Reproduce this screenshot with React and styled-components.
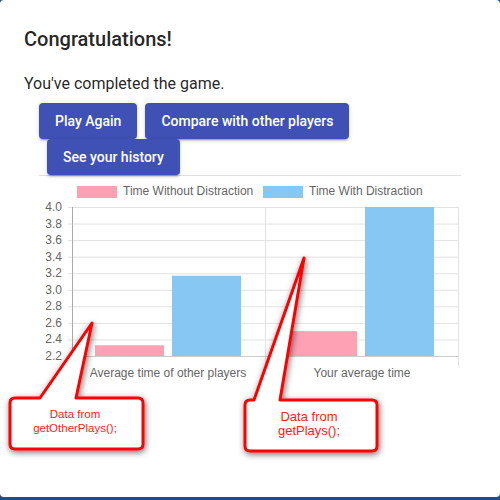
import styled, { createGlobalStyle } from "styled-components";

const Global = createGlobalStyle`
  html, body {
    margin: 0;
    padding: 0;
    background: #1f4c8c;
  }
  body {
    font-family: Roboto, "Liberation Sans", sans-serif;
  }
`;

const Dialog = styled.div`
  position: relative;
  width: 500px;
  height: 497px;
  background: #fff;
  border-radius: 4px;
  overflow: hidden;
`;

const Title = styled.h2`
  margin: 0;
  padding: 23px 24px 0;
  font-size: 20px;
  line-height: 32px;
  font-weight: 500;
  color: rgba(0, 0, 0, 0.87);
`;

const Text = styled.p`
  margin: 17px 24px 0;
  font-size: 16px;
  line-height: 24px;
  color: rgba(0, 0, 0, 0.87);
`;

const Actions = styled.div`
  margin: 7px 39px 0;
  display: flex;
  flex-wrap: wrap;
`;

const Button = styled.button`
  height: 36px;
  padding: 6px 16px;
  margin-left: ${(p) => (p.$first ? "0" : "8px")};
  border: none;
  border-radius: 4px;
  background: #3f51b5;
  color: #fff;
  font-family: Roboto, "Liberation Sans", sans-serif;
  font-size: 14px;
  font-weight: 500;
  line-height: 24px;
  letter-spacing: 0;
  cursor: pointer;
  box-shadow: 0 3px 1px -2px rgba(0, 0, 0, 0.2), 0 2px 2px 0 rgba(0, 0, 0, 0.14),
    0 1px 5px 0 rgba(0, 0, 0, 0.12);
`;

const Divider = styled.div`
  margin: 0 39px;
  height: 1px;
  background: #e0e0e0;
`;

const Chart = styled.svg`
  display: block;
  margin-left: 39px;
  font-family: "Liberation Sans", Arial, sans-serif;
  font-size: 12px;
`;

const Notes = styled.svg`
  position: absolute;
  left: 0;
  top: 0;
  pointer-events: none;
  font-family: "Liberation Sans", Arial, sans-serif;
`;

const PINK = "#ffa1b4";
const BLUE = "#86c7f3";

const plot = { left: 33, right: 419, top: 31, bottom: 180 };
const ticks = ["4.0", "3.8", "3.6", "3.4", "3.2", "3.0", "2.8", "2.6", "2.4", "2.2"];
const yOf = (v) => plot.bottom - ((v - 2.2) / 1.8) * (plot.bottom - plot.top);

const bars = [
  { x: 56, w: 69, v: 2.33, c: PINK },
  { x: 133, w: 69, v: 3.17, c: BLUE },
  { x: 250, w: 68, v: 2.5, c: PINK },
  { x: 326, w: 69, v: 4.0, c: BLUE },
];

function BarChart() {
  return (
    <Chart width="422" height="210" viewBox="0 0 422 210">
      <rect x="38" y="10" width="40" height="12" fill={PINK} />
      <text x="84" y="19" fill="#666">Time Without Distraction</text>
      <rect x="224" y="10" width="40" height="12" fill={BLUE} />
      <text x="270" y="19" fill="#666">Time With Distraction</text>

      {ticks.map((t, i) => {
        const y = plot.top + (i * (plot.bottom - plot.top)) / 9;
        return (
          <g key={t}>
            <line x1={plot.left - 4} x2={plot.right} y1={y + 0.5} y2={y + 0.5} stroke="#e2e2e2" />
            <text x="23" y={y + 4} fill="#666" textAnchor="end">{t}</text>
          </g>
        );
      })}

      <line x1="226.5" x2="226.5" y1={plot.top} y2="190" stroke="#e2e2e2" />
      <line x1="419.5" x2="419.5" y1={plot.top} y2="190" stroke="#e2e2e2" />

      {bars.map((b, i) => (
        <rect key={i} x={b.x} y={yOf(b.v)} width={b.w} height={plot.bottom - yOf(b.v)} fill={b.c} />
      ))}

      <line x1="33.5" x2="33.5" y1={plot.top} y2={plot.bottom + 1} stroke="#aaa" />
      <line x1={plot.left} x2={plot.right} y1="180.5" y2="180.5" stroke="#ccc" />

      <text x="129" y="201" fill="#666" textAnchor="middle">Average time of other players</text>
      <text x="323" y="201" fill="#666" textAnchor="middle">Your average time</text>
    </Chart>
  );
}

function Callouts() {
  return (
    <Notes width="500" height="500" viewBox="0 0 500 500">
      <defs>
        <filter id="shade" x="-30%" y="-30%" width="160%" height="160%">
          <feDropShadow dx="1" dy="2" stdDeviation="3" floodColor="#000" floodOpacity="0.55" />
        </filter>
      </defs>
      <g filter="url(#shade)" fill="#fff" stroke="#ff0000" strokeWidth="3" strokeLinejoin="round">
        <path d="M15 398 L40 398 L92 323 L76 398 L138 398 Q143 398 143 403 L143 444 Q143 449 138 449 L15 449 Q10 449 10 444 L10 403 Q10 398 15 398 Z" />
        <path d="M250 400 L254 400 L304 258 L280 400 L372 400 Q377 400 377 405 L377 446 Q377 451 372 451 L250 451 Q245 451 245 446 L245 405 Q245 400 250 400 Z" />
      </g>
      <g fill="#ff1a1a" textAnchor="middle">
        <text x="75" y="418" fontSize="11.5">Data from</text>
        <text x="75" y="432" fontSize="11.5">getOtherPlays();</text>
        <text x="309" y="421" fontSize="13">Data from</text>
        <text x="309" y="435" fontSize="13">getPlays();</text>
      </g>
    </Notes>
  );
}

export default function App() {
  return (
    <>
      <Global />
      <Dialog>
        <Title>Congratulations!</Title>
        <Text>You've completed the game.</Text>
        <Actions>
          <Button $first>Play Again</Button>
          <Button>Compare with other players</Button>
          <Button>See your history</Button>
        </Actions>
        <Divider />
        <BarChart />
        <Callouts />
      </Dialog>
    </>
  );
}
